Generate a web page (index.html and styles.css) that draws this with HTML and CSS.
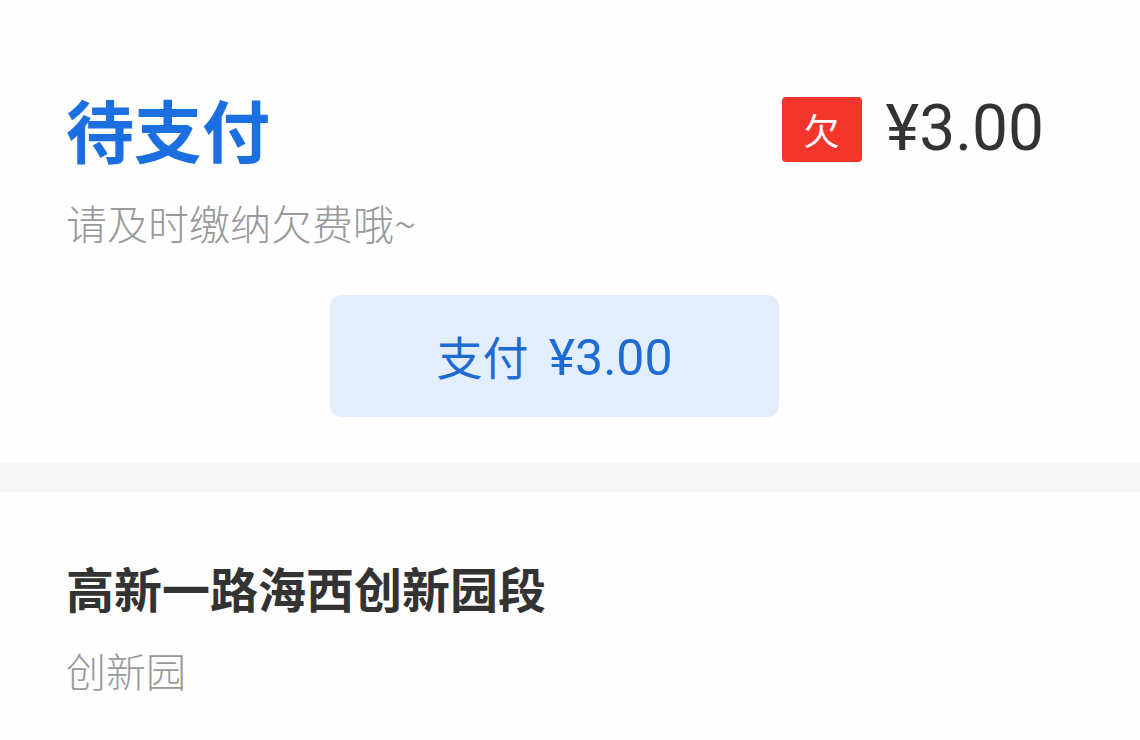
FILE: index.html
```html
<!DOCTYPE html>
<html lang="zh-CN">
<head>
  <meta charset="UTF-8">
  <title>待支付</title>
  <meta name="viewport" content="width=device-width, initial-scale=1">
  <link rel="stylesheet" href="styles.css">
</head>
<body>
  <div class="pay-card">
    <div class="pay-head">
      <div class="pay-status">待支付</div>
      <div class="pay-owe">
        <span class="owe-tag">欠</span>
        <span class="owe-amount">¥3.00</span>
      </div>
    </div>
    <div class="pay-tip">请及时缴纳欠费哦~</div>
    <div class="pay-action">
      <button class="pay-btn">支付 <span class="pay-btn-amount">¥3.00</span></button>
    </div>
  </div>

  <div class="gap-band"></div>

  <div class="park-card">
    <div class="park-name">高新一路海西创新园段</div>
    <div class="park-area">创新园</div>
  </div>
</body>
</html>
```

FILE: styles.css
```css
/* ====== Page ====== */
body {
  margin: 0;
  background: #fefefe;
  font-family: "Noto Sans CJK SC", "Noto Sans", sans-serif;
  color: #333;
}

/* ====== Payment card ====== */
.pay-card {
  padding: 88px 96px 46px 66px;
}
.pay-head {
  display: flex;
  justify-content: space-between;
  align-items: center;
}
.pay-status {
  font-size: 68px;
  line-height: 82px;
  font-weight: 700;
  color: #1b6fe0;
}
.pay-owe {
  display: flex;
  align-items: center;
  gap: 26px;
}
.owe-tag {
  width: 80px;
  height: 65px;
  margin-right: -2px;
  background: #f3352c;
  color: #fff;
  border-radius: 4px;
  font-size: 36px;
  line-height: 65px;
  text-align: center;
}
.owe-amount {
  font-family: "Roboto", "Liberation Sans", sans-serif;
  font-size: 64px;
  line-height: 82px;
  color: #333;
}
.pay-tip {
  margin-top: 26px;
  font-size: 41px;
  line-height: 52px;
  font-weight: 300;
  color: #999;
}
.pay-action {
  display: flex;
  justify-content: center;
  margin-top: 47px;
}
.pay-btn {
  width: 449px;
  height: 122px;
  margin-left: -1px;
  border: none;
  border-radius: 12px;
  background: #e3eefd;
  color: #1f6bd4;
  font-family: "Noto Sans CJK SC", sans-serif;
  font-size: 46px;
  line-height: 60px;
  padding: 0;
  cursor: pointer;
}
.pay-btn-amount {
  font-family: "Roboto", "Liberation Sans", sans-serif;
  font-size: 50px;
  margin-left: 10px;
}

/* ====== Divider band ====== */
.gap-band {
  height: 29px;
  background: #f6f6f6;
}

/* ====== Park info ====== */
.park-card {
  padding: 65px 66px 0;
}
.park-name {
  font-size: 48px;
  line-height: 60px;
  font-weight: 700;
  color: #333;
}
.park-area {
  margin-top: 27px;
  font-size: 40px;
  line-height: 52px;
  font-weight: 300;
  color: #999;
}
```
